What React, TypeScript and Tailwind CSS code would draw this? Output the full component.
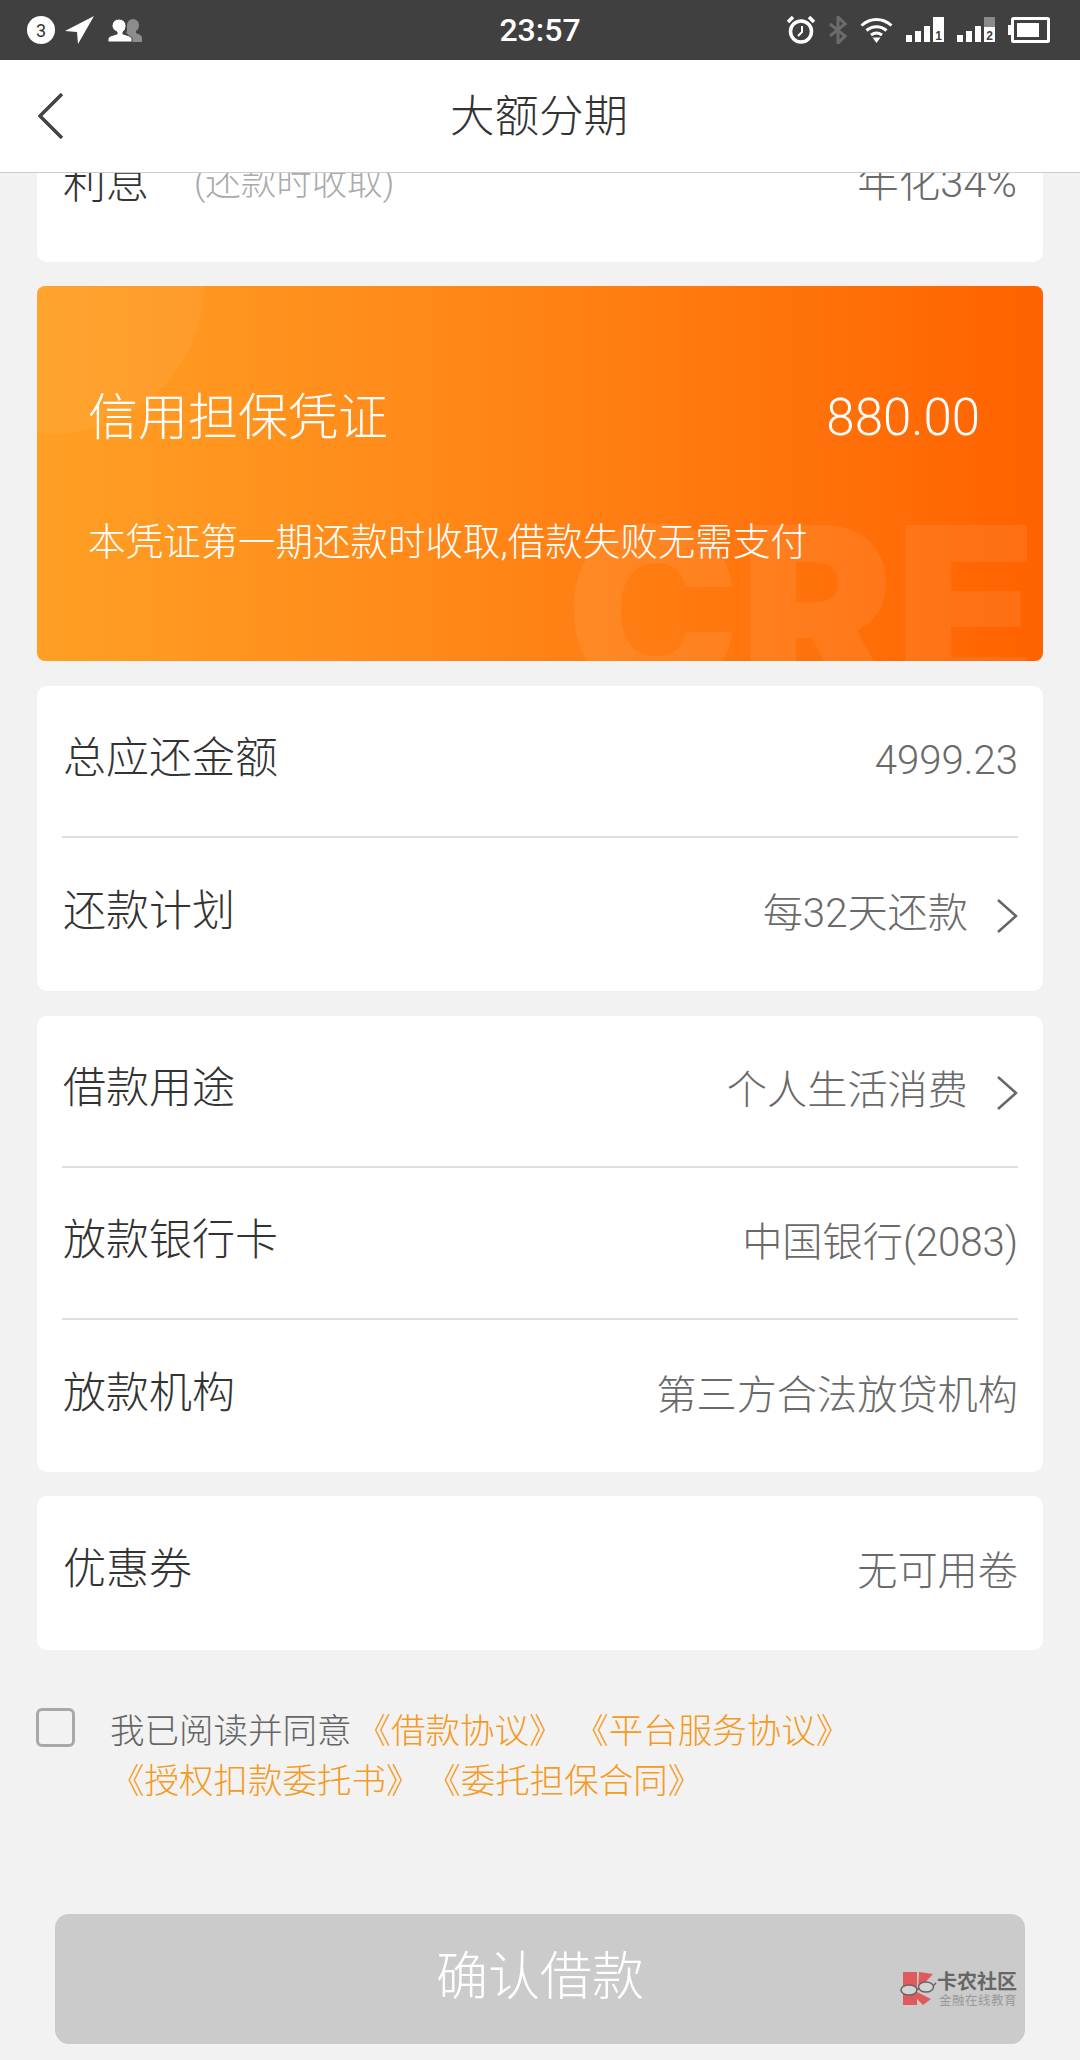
const Row = ({ label, value, arrow, divider }: { label: string; value: string; arrow?: boolean; divider?: boolean }) => (
  <div className={`mx-[25px] flex h-[152px] items-center justify-between ${divider ? "border-b-2 border-[#dedede]" : ""}`}>
    <span className="mb-[5px] ml-[1px] text-[43px] font-light text-[#333333]">{label}</span>
    <span className="flex items-center text-[40.200px] font-light text-[#6a6a6a]">
      {value}
      {arrow && (
        <svg className="mt-[4px] ml-[28px]" width="22" height="36" viewBox="0 0 22 36" fill="none">
          <path d="M2 2l18 16L2 34" stroke="#666666" strokeWidth="2.500" />
        </svg>
      )}
    </span>
  </div>
);

const StatusLeft = () => (
  <div className="flex items-center">
    <div className="ml-[27px] flex h-[28px] w-[28px] items-center justify-center rounded-full bg-white text-[18px] text-[#333333]">3</div>
    <svg className="ml-[10px]" width="29" height="28" viewBox="0 0 29 28">
      <path d="M29 0 13 28 12 16 0 15Z" fill="#ffffff" />
    </svg>
    <svg className="ml-[14px]" width="34" height="23" viewBox="0 0 34 23">
      <path d="M19 6a6 6 0 0 1 12 0c0 3-1 5-3 6v2c2 1 6 2 6 5v4H21v-5c0-2-1-3-3-4 1-1 1-2 1-8Z" fill="#8c8c8c" />
      <path d="M4 6.500a7 6.500 0 0 1 14 0c0 3-1 5-3 6.500v2c3 1 9 2 9 5v3H0v-3c0-3 6-4 9-5v-2c-3-1.500-5-3.500-5-6.500Z" fill="#ffffff" stroke="#404040" />
    </svg>
  </div>
);

const Signal = ({ n, dim }: { n: string; dim?: boolean }) => (
  <svg width="38" height="26" viewBox="0 0 38 26">
    <rect x="0" y="18" width="6" height="7" fill="#fff" />
    <rect x="9" y="14" width="6" height="11" fill="#fff" />
    <rect x="18" y="9" width="6" height="16" fill="#fff" />
    <rect x="27" y="0" width="11" height="10" fill={dim ? "#8a8a8a" : "#fff"} />
    <rect x="27" y="10" width="11" height="15" fill="#fff" />
    <text x="32.500" y="23" textAnchor="middle" fontSize="12" fontWeight="700" fill="#404040" fontFamily="Liberation Sans">{n}</text>
  </svg>
);

const StatusRight = () => (
  <div className="flex items-center justify-end pr-[30px]">
    <svg width="28" height="28" viewBox="0 0 28 28" fill="none">
      <circle cx="14" cy="15.500" r="10.500" stroke="#fff" strokeWidth="3.500" />
      <path d="M15 10v6l-4 4" stroke="#fff" strokeWidth="2" />
      <path d="M1 6 6 1M27 6 22 1" stroke="#fff" strokeWidth="3.500" />
    </svg>
    <svg className="ml-[13px]" width="20" height="28" viewBox="0 0 20 28" fill="none">
      <path d="M2 8 17 20 10 27V1l7 7L2 20" stroke="#6b6b6b" strokeWidth="3" />
    </svg>
    <svg className="ml-[12px]" width="33" height="26" viewBox="0 0 33 26" fill="none">
      <path d="M1.500 8.500c9-8 21-8 30 0M6.500 13.500c6-5 14-5 20 0M11 18c3.500-2.500 7.500-2.500 11 0" stroke="#fff" strokeWidth="3" />
      <path d="M12.500 20.500h8L16.500 26Z" fill="#fff" />
    </svg>
    <div className="ml-[13px]"><Signal n="1" /></div>
    <div className="ml-[13px]"><Signal n="2" dim /></div>
    <svg className="ml-[13px]" width="42" height="26" viewBox="0 0 42 26" fill="none">
      <rect x="4.500" y="1.500" width="36" height="23" rx="1" stroke="#fff" strokeWidth="3" />
      <rect x="0" y="8" width="3" height="10" fill="#fff" />
      <rect x="9" y="6" width="22" height="14" fill="#fff" />
    </svg>
  </div>
);

const Watermark = () => (
  <div className="absolute right-[63px] bottom-[53px] flex items-center">
    <svg width="38" height="34" viewBox="0 0 38 34" fill="none">
      <path d="M4 0h14v33H4Z" fill="#df5a5d" />
      <path d="M20 0l14 2-15 16Z" fill="#df5a5d" />
      <path d="M18 20l14 7-8 6-6-6Z" fill="#df5a5d" />
      <ellipse cx="10" cy="18" rx="8" ry="5" fill="#d4d4d4" stroke="#666666" strokeWidth="1.500" />
      <ellipse cx="27" cy="15" rx="7.500" ry="5" fill="#d4d4d4" stroke="#666666" strokeWidth="1.500" />
      <path d="M18 17h2M34 14l3-3" stroke="#666666" strokeWidth="1.500" />
    </svg>
    <div className="flex flex-col items-end leading-none">
      <span className="text-[20px] font-bold text-[#666666]">卡农社区</span>
      <span className="mt-[3px] text-[12.500px] tracking-[0.5px] text-[#999999]">金融在线教育</span>
    </div>
  </div>
);

const App = () => {
  return (
    <div className="relative flex h-[2060px] w-[1080px] flex-col overflow-hidden bg-[#f2f2f2] font-['Roboto','Noto_Sans_CJK_SC',sans-serif]">
      <div className="grid h-[60px] shrink-0 grid-cols-3 items-center bg-[#404040]">
        <StatusLeft />
        <span className="text-center text-[32px] font-medium text-white">23:57</span>
        <StatusRight />
      </div>

      <header className="relative flex h-[113px] shrink-0 items-center justify-center border-b border-[#cccccc] bg-white">
        <svg className="absolute top-[33px] left-[38px]" width="26" height="46" viewBox="0 0 26 46" fill="none">
          <path d="M24 1 2 23l22 22" stroke="#444444" strokeWidth="3.500" />
        </svg>
        <h1 className="pt-[3px] pr-[2px] text-[44.500px] font-light text-[#333333]">大额分期</h1>
      </header>

      <main className="flex flex-1 flex-col overflow-hidden px-[37px]">
        <section className="mt-[-68px] h-[157px] shrink-0 rounded-[10px] bg-white">
          <div className="mx-[25px] flex h-[152px] items-center justify-between pt-[5px]">
            <span className="ml-[1px] flex items-center text-[43px] font-light text-[#333333]">
              利息
              <span className="ml-[45px] text-[35.500px] text-[#aaaaaa]">(还款时收取)</span>
            </span>
            <span className="mr-[1px] text-[41.500px] font-light text-[#6a6a6a]">年化34%</span>
          </div>
        </section>

        <section className="relative mt-[24px] h-[375px] shrink-0 overflow-hidden rounded-[8px] bg-gradient-to-r from-[#ff9f24] to-[#ff6200] text-white">
          <div className="absolute top-[-152px] left-[-133px] h-[300px] w-[300px] rounded-full bg-white/5" />
          <span className="absolute top-[208px] left-[529px] font-['Inter',sans-serif] text-[232px] leading-none font-black text-white/[0.07]">CRE</span>
          <div className="relative flex items-center justify-between pt-[94px] pr-[63px] pl-[51px]">
            <span className="text-[50px] font-light">信用担保凭证</span>
            <span className="text-[51px] font-light">880.00</span>
          </div>
          <p className="relative mt-[57px] pl-[51px] text-[37.500px] font-light">本凭证第一期还款时收取,借款失败无需支付</p>
        </section>

        <section className="mt-[25px] h-[305px] shrink-0 rounded-[10px] bg-white">
          <Row label="总应还金额" value="4999.23" divider />
          <Row label="还款计划" value="每32天还款" arrow />
        </section>

        <section className="mt-[25px] shrink-0 rounded-[10px] bg-white">
          <Row label="借款用途" value="个人生活消费" arrow divider />
          <Row label="放款银行卡" value="中国银行(2083)" divider />
          <Row label="放款机构" value="第三方合法放贷机构" />
        </section>

        <section className="mt-[24px] h-[154px] shrink-0 rounded-[10px] bg-white">
          <Row label="优惠券" value="无可用卷" />
        </section>

        <div className="mt-[59px] flex">
          <div className="mt-[-1px] ml-[-1px] h-[39px] w-[39px] shrink-0 rounded-[6px] border-[3px] border-[#a8a8a8]" />
          <p className="mt-[-3px] ml-[35px] text-[34.500px] leading-[50px] font-light text-[#666666]">
            我已阅读并同意
            <span className="ml-[5px] text-[#f59a23]">《借款协议》</span>
            <span className="ml-[28px] text-[#f59a23]">《平台服务协议》</span>
            <br />
            <span className="text-[#f59a23]">《授权扣款委托书》</span>
            <span className="ml-[23px] text-[#f59a23]">《委托担保合同》</span>
          </p>
        </div>

        <button className="mx-[18px] mt-[108px] flex h-[130px] shrink-0 items-center justify-center rounded-[14px] bg-[#cbcbcb] pb-[2px] text-[52px] font-light text-white">
          确认借款
        </button>
      </main>

      <Watermark />
    </div>
  );
};

export default App;
